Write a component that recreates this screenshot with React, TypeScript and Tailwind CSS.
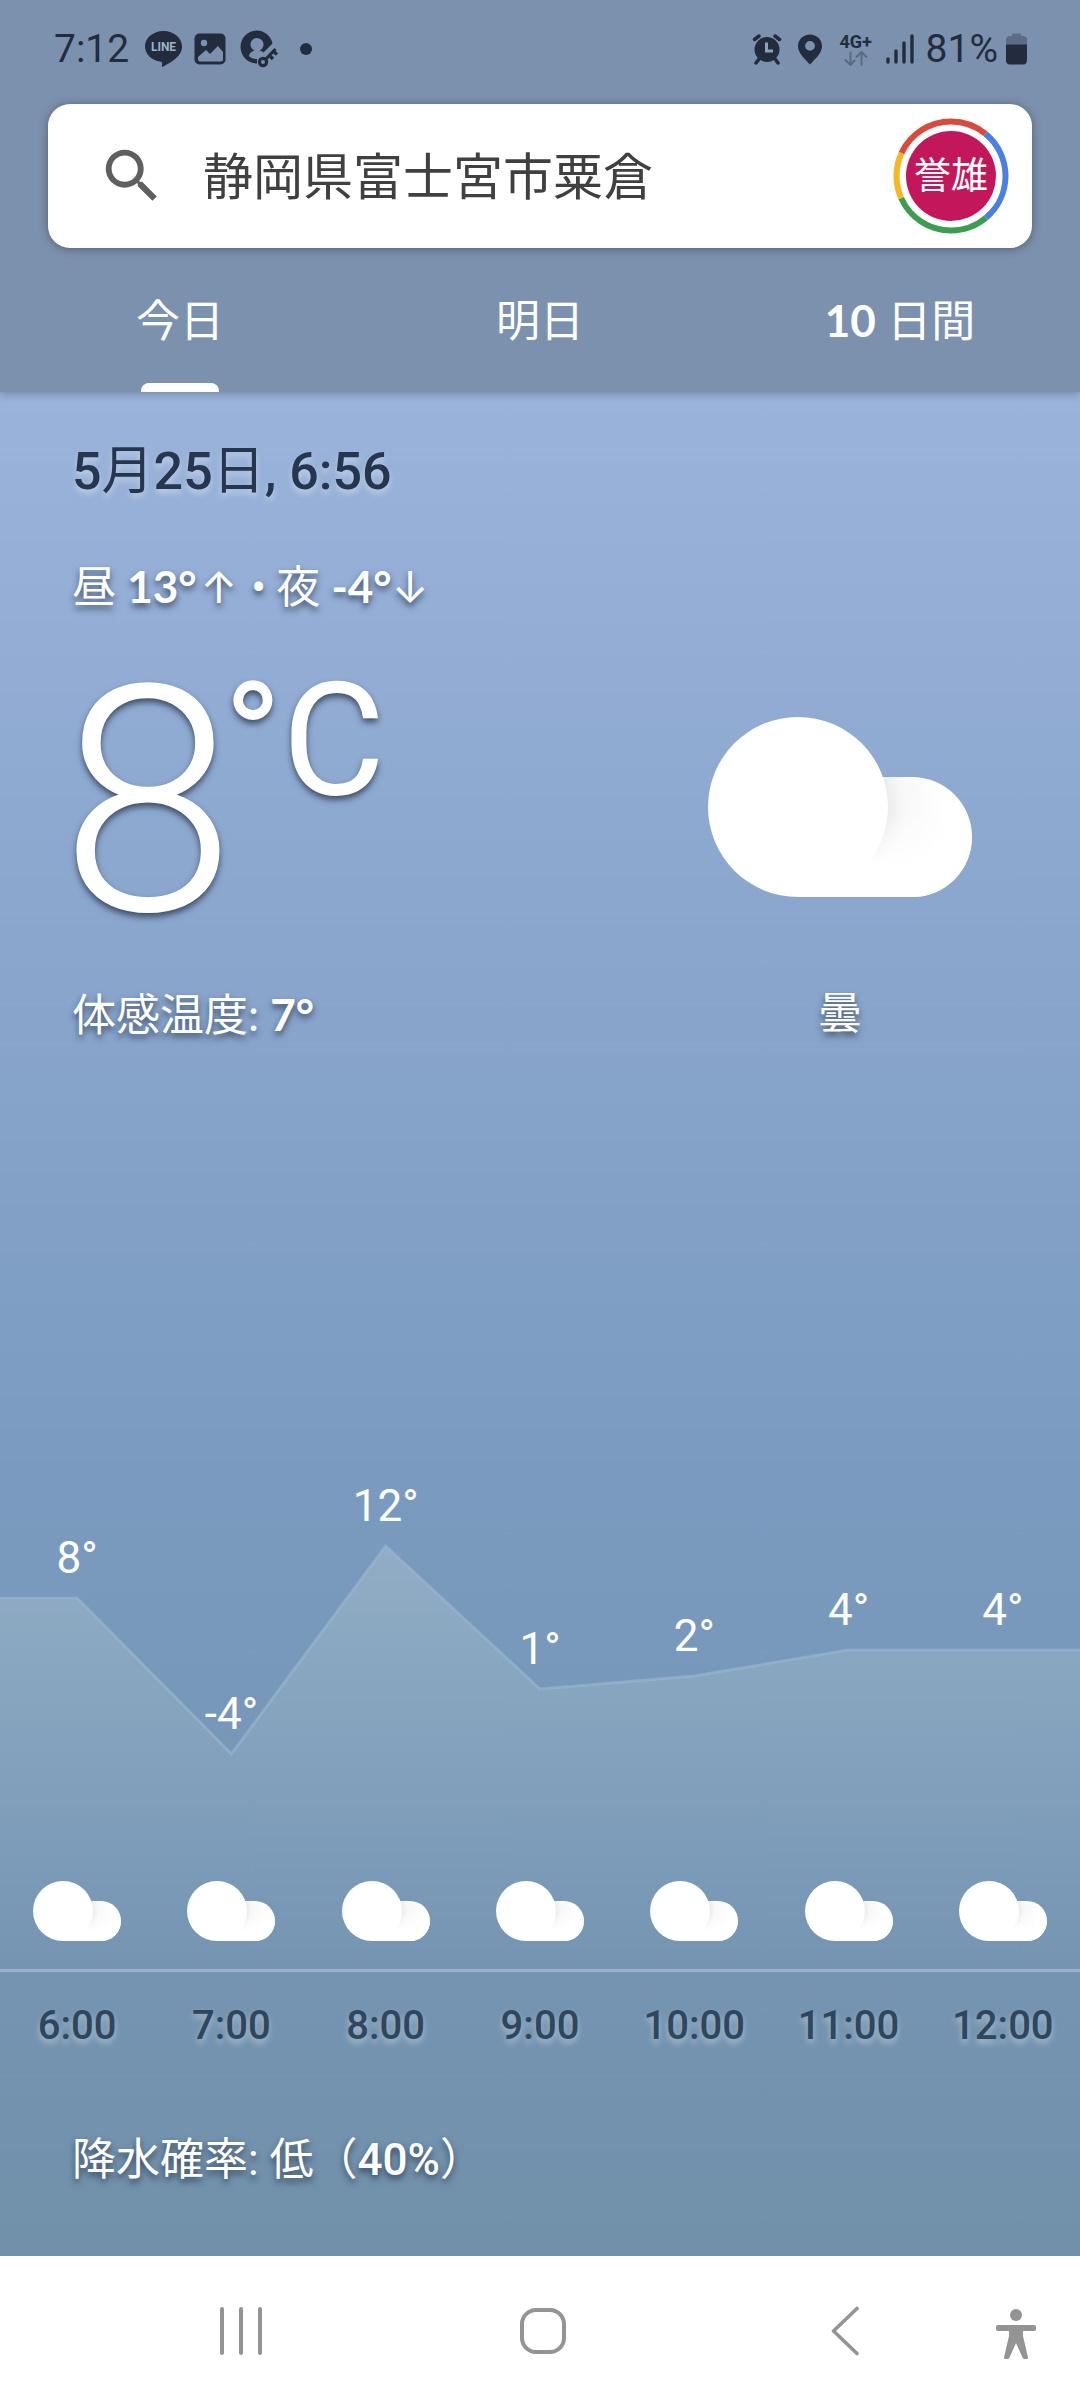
import { useId, useState } from "react";

const HOURS = [
  { time: "6:00", temp: 8 },
  { time: "7:00", temp: -4 },
  { time: "8:00", temp: 12 },
  { time: "9:00", temp: 1 },
  { time: "10:00", temp: 2 },
  { time: "11:00", temp: 4 },
  { time: "12:00", temp: 4 },
];

const TABS = ["今日", "明日", "10 日間"];

// Chart is drawn in a 1080 x 489 box, one degree is 13 units high
const CHART_WIDTH = 1080;
const CHART_HEIGHT = 489;
const tempY = (temp: number) => 222 - temp * 13;

const LIGHT_TEXT = "text-white [text-shadow:0_4px_6px_rgba(30,40,60,0.7)]";
const DARK_TEXT = "[text-shadow:0_4px_6px_rgba(255,255,255,0.4)]";
const MIXED_FONT = "font-['Lato','Noto_Sans_CJK_JP',sans-serif]";

function Cloud({ className }: { className: string }) {
  const id = useId();
  return (
    <svg viewBox="0 0 264 180" className={className} aria-hidden="true">
      <defs>
        <radialGradient id={id} gradientUnits="userSpaceOnUse" cx="90" cy="90" r="150">
          <stop offset="0.6" stopColor="#ececec" />
          <stop offset="0.7" stopColor="#f8f8f8" />
          <stop offset="1" stopColor="#ffffff" />
        </radialGradient>
        <linearGradient id={`${id}-base`} x1="0" y1="0" x2="0" y2="1">
          <stop offset="0.3" stopColor="#ffffff" stopOpacity="0" />
          <stop offset="0.75" stopColor="#ffffff" />
        </linearGradient>
      </defs>
      <path d="M90 60h114a60 60 0 0 1 0 120H90z" fill={`url(#${id})`} />
      <path d="M90 60h114a60 60 0 0 1 0 120H90z" fill={`url(#${id}-base)`} />
      <circle cx="90" cy="90" r="90" fill="#fff" />
    </svg>
  );
}

function StatusBar() {
  return (
    <div className="flex h-[98px] items-center justify-between pr-[53px] pl-[54px] text-[#222c3d]">
      <div className="flex items-center">
        <span className="text-[39px] leading-[48px]">7:12</span>
        <svg viewBox="0 0 37 36" className="ml-4 h-9 w-[37px]" aria-hidden="true">
          <path
            d="M18.500 0C8.300 0 0 6.900 0 15.400c0 7.500 6.500 13.800 15.300 15.100 1.700.3 2 1.200 1.700 3l-.2 1.600c0 .6.300.9 1 .6 5-2.200 12-6.700 15.600-10.900C35.800 22 37 18.900 37 15.400 37 6.900 28.700 0 18.500 0z"
            fill="currentColor"
          />
          <text x="18.500" y="20" textAnchor="middle" fontSize="12" fontWeight="700" fill="#9db2c8">
            LINE
          </text>
        </svg>
        <svg viewBox="0 0 32 32" className="ml-3 size-8" aria-hidden="true">
          <rect x="0.500" y="0.500" width="31" height="31" rx="5" fill="currentColor" />
          <circle cx="10" cy="10" r="3.200" fill="#7c91ad" />
          <path d="M4 24l8-7 4 4 8-8 5 6v7.500a2 2 0 0 1-2 2H6a2 2 0 0 1-2-2z" fill="#7c91ad" />
        </svg>
        <svg viewBox="0 0 38 38" className="ml-3.5 size-[38px]" aria-hidden="true">
          <path
            d="M17 .5a16.500 16.500 0 1 0 0 33V29c-4 0-7.500-1.500-8-3.500.5-2.500 3-4.500 5.500-5a6.500 6.500 0 1 1 5 0c1.500.3 3 1 4 2l9-9A16.500 16.500 0 0 0 17 .5z"
            fill="currentColor"
          />
          <g stroke="currentColor" strokeWidth="3.200" fill="none">
            <circle cx="23" cy="32" r="3.600" />
            <path d="M25.500 29.500L35.500 19M29 25l4 4M33 21l4 3.500" />
          </g>
        </svg>
        <span className="ml-[22px] size-3 rounded-full bg-[#222c3d]" />
      </div>

      <div className="flex items-center">
        <svg viewBox="0 0 30 32" className="h-8 w-[30px]" aria-hidden="true">
          <g stroke="currentColor" strokeLinecap="round" strokeWidth="3.500">
            <path d="M2.500 6.500L7 3M27.500 6.500L23 3M4 30l3-4M26 30l-3-4" />
          </g>
          <circle cx="15" cy="16.500" r="12.500" fill="currentColor" />
          <path d="M14.500 9.500v8.500H21" stroke="#8ea3bb" strokeWidth="3" fill="none" />
        </svg>
        <svg viewBox="0 0 24 31" className="ml-4 h-[31px] w-6" aria-hidden="true">
          <path
            d="M12 0.500C5.400 0.500 0 5.600 0 12c0 7 6 12 12 18.500C18 24 24 19 24 12 24 5.600 18.600.5 12 .5zM12 7a4.900 4.900 0 1 1 0 9.800A4.900 4.900 0 0 1 12 7z"
            fill="currentColor"
          />
        </svg>
        <div className="ml-4 flex w-9 flex-col items-center">
          <span className="text-[18px] leading-[18px] font-bold">4G+</span>
          <svg viewBox="0 0 26 15" className="h-[15px] w-[26px]" aria-hidden="true">
            <path
              d="M7.500 0.500v13M2 8.500l5.500 5.500L12 9M18.500 14.500v-13M13 6.500L18.500 1 24 6.500"
              stroke="#586a84"
              strokeWidth="2"
              fill="none"
            />
          </svg>
        </div>
        <svg viewBox="0 0 28 30" className="ml-3 h-[30px] w-7" aria-hidden="true">
          <path
            d="M2 25v3M10 17v11M18 9v19M26 2v26"
            stroke="currentColor"
            strokeWidth="3.400"
            strokeLinecap="round"
          />
        </svg>
        <span className="ml-3 text-[39px] leading-[48px]">81%</span>
        <svg viewBox="0 0 21 32" className="ml-2 h-8 w-[21px]" aria-hidden="true">
          <path d="M6 3V1.500Q6 .5 7 .5h7q1 0 1 1V3h2q4 0 4 4v5H0V7q0-4 4-4z" fill="#5c6c86" />
          <path d="M0 11.500h21V27q0 4.500-4 4.500H4q-4 0-4-4.500z" fill="currentColor" />
        </svg>
      </div>
    </div>
  );
}

function Avatar() {
  const arcs = [
    { color: "#4a80e0", start: 39, length: 101 },
    { color: "#3d9c50", start: 140, length: 106 },
    { color: "#f2b826", start: 246, length: 49 },
    { color: "#d94a3d", start: 295, length: 104 },
  ];
  return (
    <button type="button" aria-label="アカウント" className="relative grid size-[116px] shrink-0 place-items-center">
      <svg viewBox="0 0 116 116" className="absolute inset-0 size-full" aria-hidden="true">
        <g transform="rotate(-90 58 58)" fill="none" strokeWidth="6">
          {arcs.map((arc) => (
            <circle
              key={arc.color}
              cx="58"
              cy="58"
              r="54.500"
              pathLength="360"
              stroke={arc.color}
              strokeDasharray={`${arc.length} ${360 - arc.length}`}
              strokeDashoffset={-arc.start}
            />
          ))}
        </g>
      </svg>
      <span className="grid size-[90px] place-items-center rounded-full bg-[#c2185b] pt-0.5 text-[37px] leading-[44px] text-white">
        誉雄
      </span>
    </button>
  );
}

function Header() {
  const [place, setPlace] = useState("静岡県富士宮市粟倉");
  const [active, setActive] = useState(0);

  return (
    <header className="relative z-10 bg-[#7c91ae] shadow-[0_2px_8px_rgba(60,70,90,0.4)]">
      <StatusBar />

      {/* Search */}
      <div className="mx-12 mt-1.5 flex h-36 items-center rounded-[22px] bg-white pr-[23px] pl-[49px] shadow-[0_1px_8px_rgba(50,50,60,0.55)]">
        <label htmlFor="place" aria-label="場所を検索">
          <svg viewBox="0 0 24 24" className="size-[70px] text-[#5f5f5f]" aria-hidden="true">
            <path
              fill="currentColor"
              d="M15.500 14h-.79l-.28-.27A6.471 6.471 0 0 0 16 9.500 6.500 6.500 0 1 0 9.500 16c1.610 0 3.090-.59 4.230-1.570l.27.28v.79l5 4.990L20.490 19l-4.990-5zm-6 0C7.010 14 5 11.990 5 9.500S7.010 5 9.500 5 14 7.010 14 9.500 11.990 14 9.500 14z"
            />
          </svg>
        </label>
        <input
          id="place"
          value={place}
          onChange={(e) => setPlace(e.target.value)}
          className="ml-9 h-20 min-w-0 flex-1 pb-1.5 text-[50px] leading-[60px] text-[#404040] outline-none"
        />
        <Avatar />
      </div>

      {/* Tabs */}
      <nav className="grid grid-cols-3">
        {TABS.map((tab, i) => (
          <button
            key={tab}
            type="button"
            onClick={() => setActive(i)}
            className={`${MIXED_FONT} relative h-36 text-[44px] leading-[56px] text-white`}
          >
            {tab.startsWith("10") ? (
              <>
                <span className="font-bold">10</span> 日間
              </>
            ) : (
              tab
            )}
            {active === i && (
              <span className="absolute bottom-0 left-1/2 h-[9px] w-[78px] -translate-x-1/2 rounded-t-lg bg-white" />
            )}
          </button>
        ))}
      </nav>
    </header>
  );
}

function Current() {
  return (
    <section className="pt-[50px] pr-[108px] pl-[72px]">
      <p className={`${DARK_TEXT} text-[52px] leading-[60px] font-medium text-[#27364f]`}>
        5<span className="font-normal">月</span>25<span className="font-normal">日</span>, 6:56
      </p>
      <p className={`${LIGHT_TEXT} ${MIXED_FONT} mt-14 text-[44px] leading-[56px]`}>
        昼 <b>13°</b>
        <span className="ml-1 font-['Inter']">↑</span>
        <span className="mr-2.5 ml-3.5 font-['Roboto']">•</span>
        夜 <b>-4°</b>
        <span className="font-['Inter']">↓</span>
      </p>

      <div className="mt-[50px] flex justify-between">
        <div>
          <div className={`${LIGHT_TEXT} flex items-start`}>
            <span className="-ml-3 text-[316px] leading-[272px] font-light">8</span>
            <span className="-ml-3 text-[158px] leading-[148px]">°C</span>
          </div>
          <p className={`${LIGHT_TEXT} ${MIXED_FONT} mt-12 text-[44px] leading-[56px]`}>
            体感温度: <b>7°</b>
          </p>
        </div>
        <div className="flex flex-col items-center pt-[51px]">
          <Cloud className="h-[180px] w-[264px]" />
          <p className={`${LIGHT_TEXT} mt-[89px] text-[44px] leading-[56px]`}>曇</p>
        </div>
      </div>
    </section>
  );
}

function Hourly() {
  const step = CHART_WIDTH / HOURS.length;
  const points = HOURS.map((h, i) => `${step * (i + 0.5)},${tempY(h.temp)}`);
  const line = [
    `0,${tempY(HOURS[0].temp)}`,
    ...points,
    `${CHART_WIDTH},${tempY(HOURS[HOURS.length - 1].temp)}`,
  ].join(" ");

  return (
    <section className="mt-[438px]">
      <div className="relative border-b-[3px] border-[#9bb0cd]">
        <svg
          viewBox={`0 0 ${CHART_WIDTH} ${CHART_HEIGHT}`}
          preserveAspectRatio="none"
          className="absolute inset-0 size-full"
          aria-hidden="true"
        >
          <defs>
            <linearGradient id="area" gradientUnits="userSpaceOnUse" x1="0" y1="60" x2="0" y2={CHART_HEIGHT}>
              <stop offset="0" stopColor="#dcebdc" stopOpacity="0.24" />
              <stop offset="1" stopColor="#dcebdc" stopOpacity="0" />
            </linearGradient>
          </defs>
          <polygon points={`0,${CHART_HEIGHT} ${line} ${CHART_WIDTH},${CHART_HEIGHT}`} fill="url(#area)" />
          <polyline points={line} fill="none" stroke="#9bb6d3" strokeOpacity="0.6" strokeWidth="3" />
        </svg>
        <div className="relative grid h-[489px] grid-cols-7">
          {HOURS.map((h) => (
            <div
              key={h.time}
              className="flex flex-col items-center justify-between pb-7"
              style={{ paddingTop: tempY(h.temp) - 66 }}
            >
              <span className="text-[44px] leading-[52px] text-white">{h.temp}°</span>
              <Cloud className="h-[60px] w-[88px]" />
            </div>
          ))}
        </div>
      </div>
      <div className="grid grid-cols-7 pt-7">
        {HOURS.map((h) => (
          <span
            key={h.time}
            className={`${DARK_TEXT} text-center text-[40px] leading-[52px] font-medium text-[#2f465c]`}
          >
            {h.time}
          </span>
        ))}
      </div>
    </section>
  );
}

function NavBar() {
  return (
    <nav className="flex h-36 items-center bg-white pt-1.5 pr-[40px] pl-[90px] text-[#949494]">
      <button type="button" aria-label="履歴" className="grid flex-1 place-items-center">
        <svg viewBox="0 0 44 48" className="h-12 w-11" aria-hidden="true">
          <path d="M3 2v44M22 2v44M41 2v44" stroke="currentColor" strokeWidth="4" strokeLinecap="round" />
        </svg>
      </button>
      <button type="button" aria-label="ホーム" className="grid flex-1 place-items-center">
        <svg viewBox="0 0 48 48" className="size-12" aria-hidden="true">
          <rect x="3" y="3" width="42" height="42" rx="14" fill="none" stroke="currentColor" strokeWidth="4" />
        </svg>
      </button>
      <button type="button" aria-label="戻る" className="grid flex-1 place-items-center">
        <svg viewBox="0 0 30 50" className="h-[50px] w-[30px]" aria-hidden="true">
          <path
            d="M27 2.500L3.500 25 27 47.500"
            fill="none"
            stroke="currentColor"
            strokeWidth="3.600"
            strokeLinecap="round"
            strokeLinejoin="round"
          />
        </svg>
      </button>
      <button type="button" aria-label="ユーザー補助" className="w-11 pt-1.5">
        <svg viewBox="0 0 40 50" className="h-[50px] w-10" aria-hidden="true">
          <circle cx="20" cy="6" r="6" fill="currentColor" />
          <path
            d="M2.500 16h35a2.500 2.500 0 0 1 0 6H27v5l5 21.500a1.500 1.500 0 0 1-1.500 1.500h-2a2 2 0 0 1-2-1.500L20 34l-6.500 14.500a2 2 0 0 1-2 1.500h-2A1.500 1.500 0 0 1 8 48.500L13 27v-5H2.500a2.500 2.500 0 0 1 0-6z"
            fill="currentColor"
          />
        </svg>
      </button>
    </nav>
  );
}

export default function App() {
  return (
    <div className="flex min-h-screen flex-col font-['Roboto','Noto_Sans_CJK_JP',sans-serif]" lang="ja">
      <Header />
      <main className="flex-1 bg-[linear-gradient(#9ab3da,#88a4cb_34%,#7a9bbf_58%,#7696b6_78%,#7190a9)] pb-[66px]">
        <Current />
        <Hourly />
        <p className={`${LIGHT_TEXT} mt-20 px-[72px] text-[44px] leading-[56px]`}>
          降水確率: 低（<span className="font-medium">40%</span>）
        </p>
      </main>
      <NavBar />
    </div>
  );
}
